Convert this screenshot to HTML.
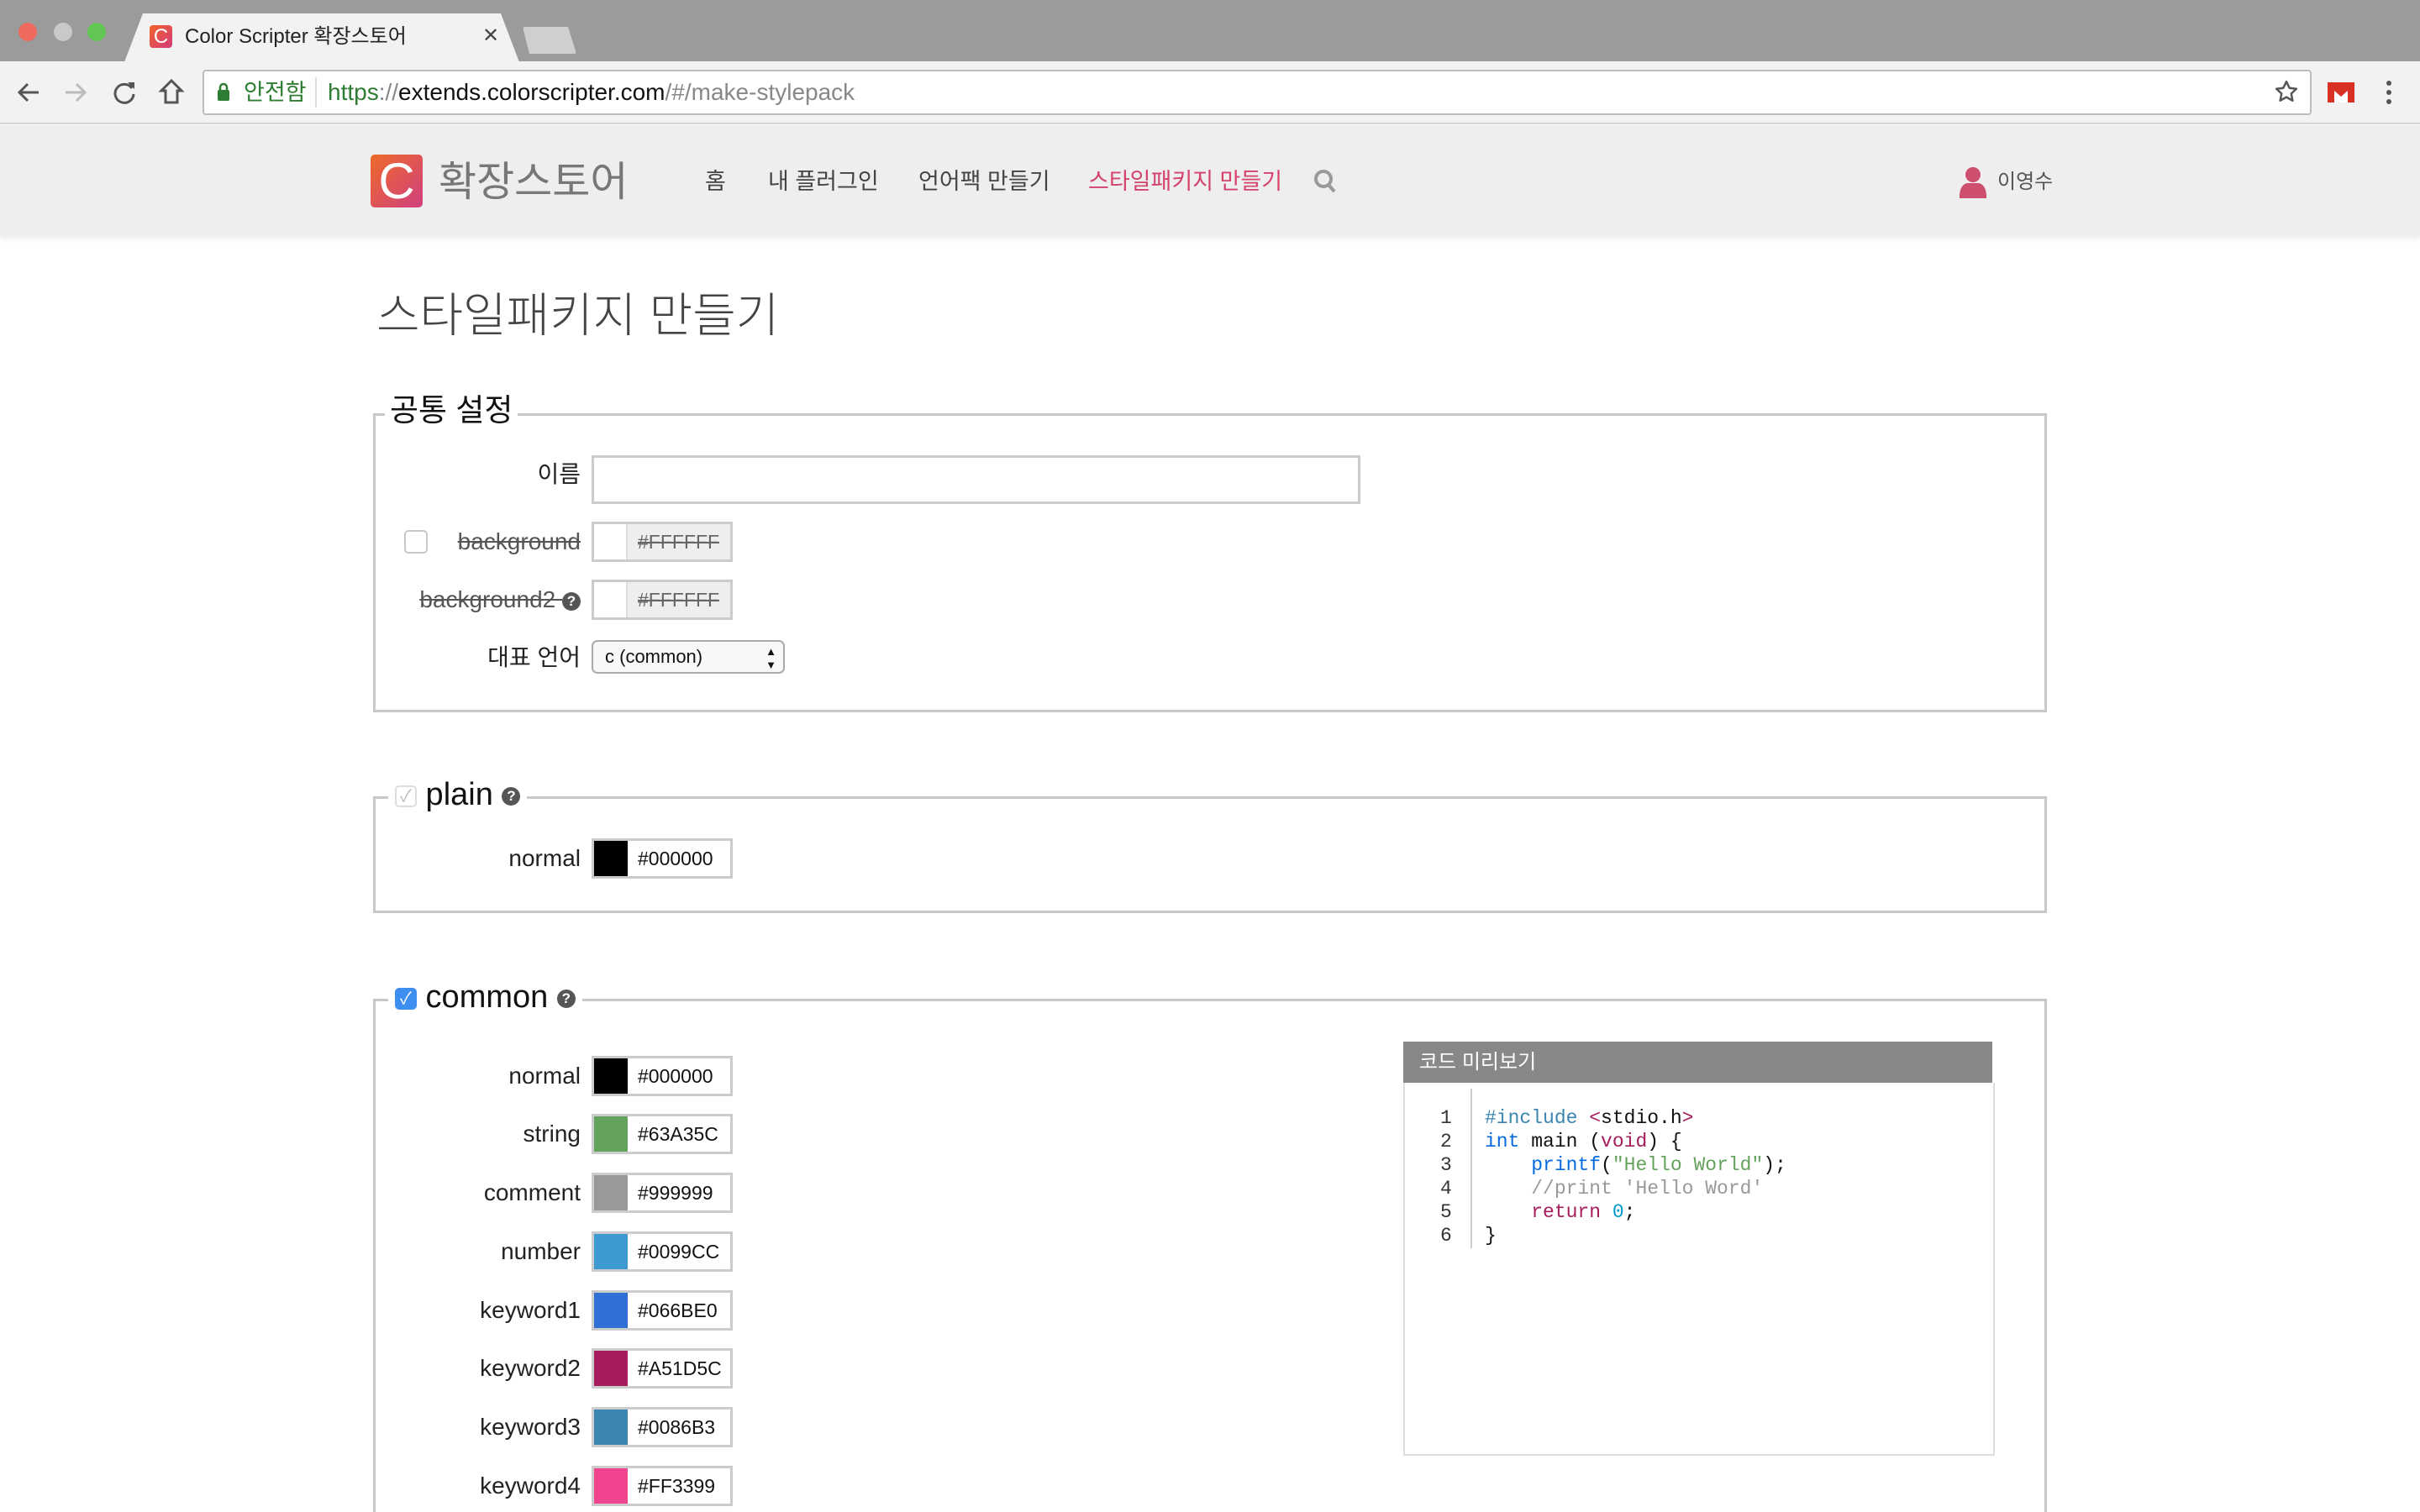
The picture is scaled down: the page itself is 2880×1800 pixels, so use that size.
<!DOCTYPE html>
<html style="width:2880px;height:1800px;overflow:hidden"><head><meta charset="utf-8">
<style>
*{box-sizing:border-box;margin:0;padding:0}
body{width:2880px;height:1800px;overflow:hidden;background:#fff;font-family:"Liberation Sans","Noto Sans CJK KR",sans-serif;position:relative;color:#222}
.a{position:absolute}
.lbl{position:absolute;right:2189px;font-size:28px;line-height:48px;color:#222;white-space:nowrap;text-align:right}
.cb{position:absolute;left:704px;width:168px;height:48px;border:3px solid #ccc;background:#fff}
.cb .sw{position:absolute;left:0;top:0;width:40px;height:42px}
.cb .tx{position:absolute;left:52px;top:0;line-height:42px;font-size:23px;color:#111}
.q{display:inline-block;width:22px;height:22px;border-radius:50%;background:#555;color:#fff;font-size:17px;line-height:22px;text-align:center;font-weight:bold;vertical-align:middle}
.code{font-family:"Liberation Mono","DejaVu Sans Mono",monospace;font-size:23px;line-height:28px;white-space:pre}
</style></head><body>
<!-- tab bar -->
<div class="a" style="left:0;top:0;width:2880px;height:73px;background:#9b9b9b"></div>
<div class="a" style="left:22px;top:27px;width:22px;height:22px;border-radius:50%;background:#ee6a5f"></div>
<div class="a" style="left:64px;top:27px;width:22px;height:22px;border-radius:50%;background:#c9c9c9"></div>
<div class="a" style="left:104px;top:27px;width:22px;height:22px;border-radius:50%;background:#62c655"></div>
<div class="a" style="left:148px;top:16px;width:470px;height:58px;background:#f2f2f2;clip-path:polygon(22px 0,448px 0,470px 58px,0 58px)"></div>
<div class="a" style="left:178px;top:30px;width:27px;height:27px;border-radius:4px;background:linear-gradient(135deg,#f0642c,#d43a7a);color:#fff;font-size:24px;line-height:27px;text-align:center">C</div>
<div class="a" style="left:220px;top:28px;font-size:24px;line-height:32px;color:#222">Color Scripter 확장스토어</div>
<div class="a" style="left:574px;top:28px;font-size:24px;color:#444">✕</div>
<div class="a" style="left:622px;top:32px;width:64px;height:32px;background:#cfcfcf;clip-path:polygon(0 0,54px 0,64px 32px,8px 32px);border-radius:3px"></div>
<!-- toolbar -->
<div class="a" style="left:0;top:73px;width:2880px;height:75px;background:#f2f2f2;border-bottom:2px solid #d6d6d6"></div>
<svg class="a" style="left:18px;top:94px" width="32" height="32" viewBox="0 0 32 32"><path d="M28 16H6M15 6L5 16l10 10" stroke="#555" stroke-width="3" fill="none"/></svg>
<svg class="a" style="left:74px;top:94px" width="32" height="32" viewBox="0 0 32 32"><path d="M4 16h22M17 6l10 10-10 10" stroke="#bbb" stroke-width="3" fill="none"/></svg>
<svg class="a" style="left:132px;top:94px" width="32" height="32" viewBox="0 0 32 32"><path d="M25 11A11 11 0 1 0 27 18" stroke="#555" stroke-width="3" fill="none"/><path d="M20 4h8v8z" fill="#555"/></svg>
<svg class="a" style="left:188px;top:92px" width="32" height="34" viewBox="0 0 32 34"><path d="M16 4L4 16h5v14h14V16h5z" stroke="#555" stroke-width="3" fill="none"/></svg>
<div class="a" style="left:241px;top:83px;width:2510px;height:54px;background:#fff;border:2px solid #bdbdbd;border-radius:4px"></div>
<svg class="a" style="left:258px;top:97px" width="16" height="24" viewBox="0 0 16 24"><path d="M4 11V7a4 4 0 0 1 8 0v4" stroke="#2e7d32" stroke-width="2.5" fill="none"/><rect x="1" y="10" width="14" height="13" rx="2" fill="#2e7d32"/></svg>
<div class="a" style="left:290px;top:92px;font-size:27px;line-height:36px;color:#2e7d32">안전함</div>
<div class="a" style="left:375px;top:92px;width:2px;height:36px;background:#ddd"></div>
<div class="a" style="left:390px;top:92px;font-size:28px;line-height:36px;color:#111"><span style="color:#2e7d32">https</span><span style="color:#888">://</span>extends.colorscripter.com<span style="color:#888">/#/make-stylepack</span></div>
<svg class="a" style="left:2706px;top:94px" width="30" height="30" viewBox="0 0 24 24"><path d="M12 2.5l2.9 6.1 6.6.8-4.9 4.6 1.3 6.6L12 17.3l-5.9 3.3 1.3-6.6-4.9-4.6 6.6-.8z" stroke="#555" stroke-width="2" fill="none" stroke-linejoin="round"/></svg>
<svg class="a" style="left:2770px;top:98px" width="32" height="24" viewBox="0 0 32 24"><rect width="32" height="24" fill="#d93025"/><path d="M4 4v20h24V4L16 14z" fill="#fff"/><path d="M4 4h3l9 8 9-8h3v20h-4V10l-8 7-8-7v14H4z" fill="#d93025"/></svg>
<div class="a" style="left:2840px;top:96px;width:6px;height:6px;border-radius:50%;background:#555;box-shadow:0 11px 0 #555,0 22px 0 #555"></div>
<!-- nav -->
<div class="a" style="left:0;top:149px;width:2880px;height:132px;background:#eeeeee;box-shadow:0 3px 6px rgba(0,0,0,.08)"></div>
<div class="a" style="left:441px;top:184px;width:62px;height:63px;border-radius:5px;background:linear-gradient(135deg,#ef6a2a,#d03f7f);color:#fff;font-size:60px;line-height:63px;text-align:center;font-weight:300">C</div>
<div class="a" style="left:522px;top:184px;font-size:49px;line-height:66px;color:#777">확장스토어</div>
<div class="a" style="left:839px;top:197px;font-size:27px;line-height:38px;color:#444">홈</div>
<div class="a" style="left:914px;top:197px;font-size:27px;line-height:38px;color:#444">내 플러그인</div>
<div class="a" style="left:1093px;top:197px;font-size:27px;line-height:38px;color:#444">언어팩 만들기</div>
<div class="a" style="left:1295px;top:197px;font-size:27px;line-height:38px;color:#d4436c">스타일패키지 만들기</div>
<svg class="a" style="left:1563px;top:200px" width="30" height="32" viewBox="0 0 30 32"><circle cx="12" cy="13" r="9" stroke="#999" stroke-width="4" fill="none"/><path d="M18 20l7 8" stroke="#999" stroke-width="4"/></svg>
<svg class="a" style="left:2330px;top:198px" width="36" height="40" viewBox="0 0 36 40"><circle cx="18" cy="10" r="9" fill="#cf4f6e"/><path d="M2 36c0-12 6-16 10-16h12c4 0 10 4 10 16v2H2z" fill="#cf4f6e"/></svg>
<div class="a" style="left:2377px;top:199px;font-size:24px;line-height:36px;color:#555">이영수</div>
<!-- title -->
<div class="a" style="left:448px;top:340px;font-size:56px;line-height:72px;color:#444;font-weight:300">스타일패키지 만들기</div>
<!-- fieldset 1 -->
<div class="a" style="left:444px;top:492px;width:1992px;height:356px;border:3px solid #c8c8c8"></div>
<div class="a" style="left:458px;top:464px;padding:0 6px;background:#fff;font-size:37px;line-height:50px;color:#111">공통 설정</div>
<div class="lbl" style="top:541px">이름</div>
<div class="a" style="left:704px;top:542px;width:915px;height:58px;border:3px solid #ccc"></div>
<div class="a" style="left:481px;top:631px;width:28px;height:28px;border:2px solid #c8c8c8;border-radius:5px"></div>
<div class="lbl" style="top:621px;color:#555;text-decoration:line-through">background</div>
<div class="cb" style="top:621px"><div class="sw" style="background:#fff;border-right:2px solid #ddd"></div><div class="tx" style="left:40px;width:122px;padding-left:12px;background:#eee;color:#666;text-decoration:line-through">#FFFFFF</div></div>
<div class="lbl" style="top:690px;color:#555"><span style="text-decoration:line-through">background2 </span><span class="q">?</span></div>
<div class="cb" style="top:690px"><div class="sw" style="background:#fff;border-right:2px solid #ddd"></div><div class="tx" style="left:40px;width:122px;padding-left:12px;background:#eee;color:#666;text-decoration:line-through">#FFFFFF</div></div>
<div class="lbl" style="top:759px">대표 언어</div>
<div class="a" style="left:704px;top:762px;width:230px;height:40px;border:2px solid #aaa;border-radius:7px;background:#f8f8f8;font-size:22px;line-height:36px;padding-left:14px;color:#111">c (common)<span style="position:absolute;right:8px;top:0;font-size:13px;line-height:16px;padding-top:4px">▲<br>▼</span></div>
<!-- fieldset plain -->
<div class="a" style="left:444px;top:948px;width:1992px;height:139px;border:3px solid #c8c8c8"></div>
<div class="a" style="left:462px;top:918px;padding:0 8px;background:#fff;font-size:38px;line-height:56px;color:#111;white-space:nowrap"><span style="display:inline-block;width:26px;height:26px;border:2px solid #ddd;border-radius:5px;vertical-align:middle;color:#bbb;font-size:20px;line-height:22px;text-align:center">✓</span> plain <span class="q">?</span></div>
<div class="lbl" style="top:998px">normal</div>
<div class="cb" style="top:998px"><div class="sw" style="background:#000"></div><div class="tx">#000000</div></div>
<!-- fieldset common -->
<div class="a" style="left:444px;top:1189px;width:1992px;height:611px;border:3px solid #c8c8c8;border-bottom:none"></div>
<div class="a" style="left:462px;top:1159px;padding:0 8px;background:#fff;font-size:38px;line-height:56px;color:#111;white-space:nowrap"><span style="display:inline-block;width:26px;height:26px;background:#3e8ef0;border-radius:5px;vertical-align:middle;color:#fff;font-size:20px;line-height:26px;text-align:center">✓</span> common <span class="q">?</span></div>
<div class="lbl" style="top:1257px">normal</div>
<div class="cb" style="top:1257px"><div class="sw" style="background:#000"></div><div class="tx">#000000</div></div>
<div class="lbl" style="top:1326px">string</div>
<div class="cb" style="top:1326px"><div class="sw" style="background:#63A35C"></div><div class="tx">#63A35C</div></div>
<div class="lbl" style="top:1396px">comment</div>
<div class="cb" style="top:1396px"><div class="sw" style="background:#999999"></div><div class="tx">#999999</div></div>
<div class="lbl" style="top:1466px">number</div>
<div class="cb" style="top:1466px"><div class="sw" style="background:#3d99cf"></div><div class="tx">#0099CC</div></div>
<div class="lbl" style="top:1536px">keyword1</div>
<div class="cb" style="top:1536px"><div class="sw" style="background:#2f6fd6"></div><div class="tx">#066BE0</div></div>
<div class="lbl" style="top:1605px">keyword2</div>
<div class="cb" style="top:1605px"><div class="sw" style="background:#A51D5C"></div><div class="tx">#A51D5C</div></div>
<div class="lbl" style="top:1675px">keyword3</div>
<div class="cb" style="top:1675px"><div class="sw" style="background:#3a86b0"></div><div class="tx">#0086B3</div></div>
<div class="lbl" style="top:1745px">keyword4</div>
<div class="cb" style="top:1745px"><div class="sw" style="background:#f0448f"></div><div class="tx">#FF3399</div></div>
<!-- preview -->
<div class="a" style="left:1670px;top:1240px;width:701px;height:49px;background:#888;color:#fff;font-size:24px;line-height:49px;padding-left:19px">코드 미리보기</div>
<div class="a" style="left:1670px;top:1289px;width:704px;height:444px;border:2px solid #ddd;border-top:none;background:#fff"></div>
<div class="a" style="left:1750px;top:1296px;width:2px;height:190px;background:#ccc"></div>
<div class="a code" style="left:1714px;top:1317px;color:#333;text-align:right">1
2
3
4
5
6</div>
<div class="a code" style="left:1767px;top:1317px;color:#111"><span style="color:#3a86b0">#include</span> <span style="color:#A51D5C">&lt;</span>stdio.h<span style="color:#A51D5C">&gt;</span>
<span style="color:#066BE0">int</span> main (<span style="color:#A51D5C">void</span>) {
    <span style="color:#066BE0">printf</span>(<span style="color:#63A35C">"Hello World"</span>);
    <span style="color:#999">//print 'Hello Word'</span>
    <span style="color:#A51D5C">return</span> <span style="color:#0099CC">0</span>;
}</div>
</body></html>
